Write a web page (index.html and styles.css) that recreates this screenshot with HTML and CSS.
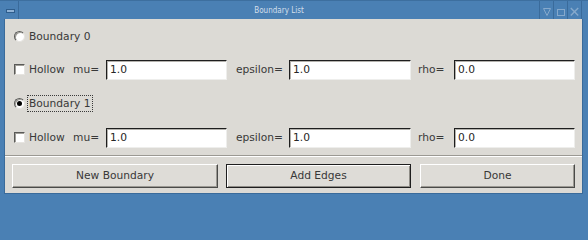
FILE: index.html
```html
<!DOCTYPE html>
<html>
<head>
<meta charset="utf-8">
<link rel="stylesheet" href="styles.css">
</head>
<body>
<div class="window">
  <div class="titlebar">
    <div class="tb-menu"><span class="dash"></span></div>
    <div class="title">Boundary List</div>
    <div class="tb-btn">
      <svg width="13" height="18" viewBox="0 0 13 18"><path d="M3.5 8.5 L10.5 8.5 L7 15.5 Z" fill="none" stroke="#86a9cc" stroke-width="1"/></svg>
    </div>
    <div class="tb-btn">
      <svg width="13" height="18" viewBox="0 0 13 18"><rect x="3.5" y="9.5" width="7" height="6" fill="none" stroke="#86a9cc" stroke-width="1"/></svg>
    </div>
    <div class="tb-btn last">
      <svg width="14" height="18" viewBox="0 0 14 18"><path d="M3 8 L11 16 M11 8 L3 16" fill="none" stroke="#86a9cc" stroke-width="1.5"/></svg>
    </div>
  </div>
  <div class="frame">
    <div class="client">
      <div class="row r1 radio-row">
        <span class="radio"></span>
        <span class="rlabel">Boundary 0</span>
      </div>
      <div class="row r2 fields">
        <div class="check-cell"><span class="check"></span><span>Hollow</span></div>
        <span class="lbl">mu=</span>
        <div class="entry">1.0</div>
        <span class="lbl eps">epsilon=</span>
        <div class="entry">1.0</div>
        <span class="lbl rho">rho=</span>
        <div class="entry">0.0</div>
      </div>
      <div class="row r3 radio-row">
        <span class="radio on"></span>
        <span class="rlabel focus">Boundary 1</span>
      </div>
      <div class="row r4 fields">
        <div class="check-cell"><span class="check"></span><span>Hollow</span></div>
        <span class="lbl">mu=</span>
        <div class="entry">1.0</div>
        <span class="lbl eps">epsilon=</span>
        <div class="entry">1.0</div>
        <span class="lbl rho">rho=</span>
        <div class="entry">0.0</div>
      </div>
      <div class="separator"></div>
      <div class="buttons">
        <div class="btn b-new">New Boundary</div>
        <div class="btn b-add default">Add Edges</div>
        <div class="btn b-done">Done</div>
      </div>
    </div>
  </div>
</div>
</body>
</html>
```
FILE: styles.css
```css
* { box-sizing: border-box; }
html, body { margin: 0; padding: 0; }
body {
  background: #4a80b4;
  font-family: "DejaVu Sans", "Bitstream Vera Sans", sans-serif;
  font-size: 10.67px;
  color: #383838;
}
.window {
  width: 588px;
  height: 200px;
  display: flex;
  flex-direction: column;
  background: #4a80b4;
  overflow: hidden;
}
.titlebar {
  height: 19px;
  flex: none;
  display: flex;
  align-items: stretch;
  padding-right: 6px;
  border-top: 1px solid #3d6f9f;
  background: #4a80b4;
}
.tb-menu {
  width: 19px;
  border-right: 1px solid #3a6b9b;
  display: flex;
  align-items: center;
  justify-content: center;
  padding-left: 2px;
}
.dash {
  display: block;
  width: 9px;
  height: 4px;
  background: #8fb2d6;
  border: 1px solid #2e5d8c;
  margin-top: 2px;
}
.title {
  flex: 1;
  text-align: center;
  font-family: "DejaVu Sans Condensed", "Liberation Sans Narrow", sans-serif;
  font-size: 8px;
  line-height: 19px;
  color: #d3dfeb;
}
.tb-btn {
  width: 14px;
  border-left: 1px solid #3a6b9b;
  display: flex;
  align-items: flex-start;
}
.tb-btn.last {
  width: 15px;
  border-right: 1px solid #3a6b9b;
}
.tb-btn svg { display: block; margin-top: -1px; }
.frame {
  flex: 1;
  display: flex;
  padding: 0 5px 6px 4px;
}
.client {
  flex: 1;
  background: #dcdad5;
  border: 1px solid #3a6b9b;
  border-top: none;
  display: flex;
  flex-direction: column;
}
.row {
  padding-left: 9px;
  display: flex;
  align-items: center;
}
.r1 { height: 34px; }
.r2 { height: 33px; }
.r3 { height: 34px; }
.r4 { height: 35px; }
.radio {
  width: 11px;
  height: 11px;
  border-radius: 50%;
  background: #ffffff;
  border: 1px solid;
  border-color: #5a5a58 #e6e4e0 #e6e4e0 #5a5a58;
  box-shadow: inset 1px 1px 0 #a09e98;
  position: relative;
  flex: none;
}
.radio.on::after {
  content: "";
  position: absolute;
  left: 2px;
  top: 2px;
  width: 5px;
  height: 5px;
  border-radius: 50%;
  background: #000;
}
.rlabel {
  margin-left: 2px;
  padding: 0 1px;
  border: 1px dotted transparent;
  line-height: 15px;
}
.rlabel.focus { border-color: #3a3a3a; }
.fields {
  display: grid;
  grid-template-columns: 59px 33px 121px 62px 122px 43px 121px;
  align-items: center;
  align-content: center;
}
.check-cell {
  display: flex;
  align-items: center;
}
.check {
  width: 11px;
  height: 11px;
  background: #ffffff;
  border: 1px solid;
  border-color: #5a5a58 #e6e4e0 #e6e4e0 #5a5a58;
  box-shadow: inset 1px 1px 0 #a09e98;
  margin-right: 4px;
  flex: none;
}
.lbl.eps { padding-left: 9px; }
.lbl.rho { padding-left: 7px; }
.entry {
  height: 20px;
  background: #ffffff;
  border: 1px solid;
  border-color: #1e1e1e #eeeeec #eeeeec #1e1e1e;
  box-shadow: inset 1px 1px 0 #b4b2ad;
  padding-left: 3px;
  line-height: 18px;
  color: #262626;
}
.separator {
  height: 2px;
  border-top: 1px solid #9b9993;
  border-bottom: 1px solid #ffffff;
  flex: none;
}
.buttons {
  display: flex;
  gap: 8px;
  padding: 7px 7px 0 7px;
}
.btn {
  height: 24px;
  background: #dedcd7;
  border: 1px solid;
  border-color: #ffffff #4a4a48 #4a4a48 #ffffff;
  box-shadow: inset -1px -1px 0 #9b9993;
  text-align: center;
  line-height: 21px;
  color: #383838;
}
.b-new { width: 206px; }
.b-add { width: 185px; margin-right: 1px; }
.b-done { width: 155px; }
.btn.default {
  border-color: #1e1e1e;
  box-shadow: inset 1px 1px 0 #ffffff, inset -1px -1px 0 #8e8c86;
}
```
